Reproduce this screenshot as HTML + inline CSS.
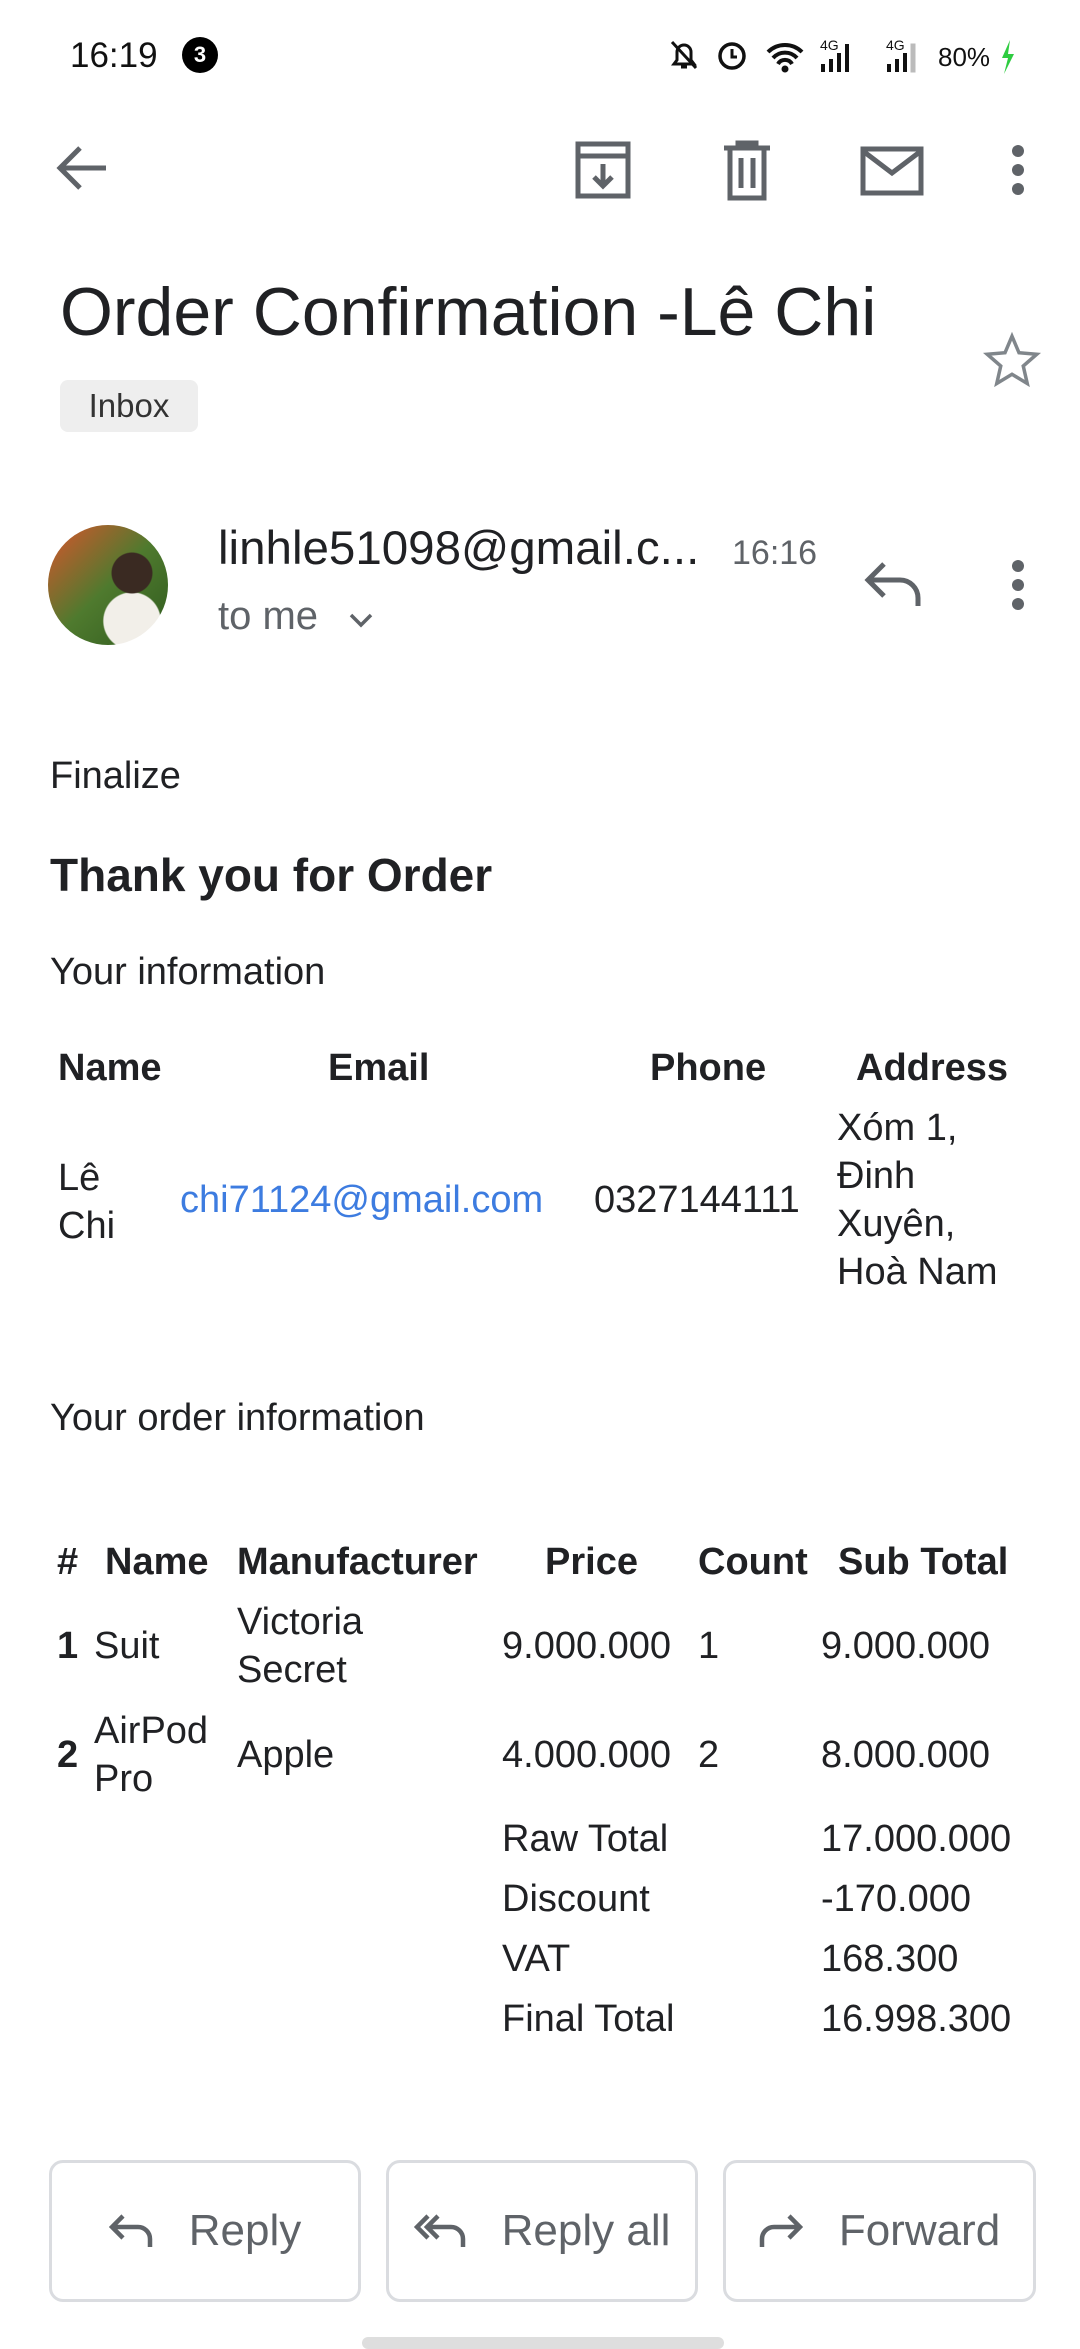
<!DOCTYPE html>
<html><head><meta charset="utf-8"><style>
*{margin:0;padding:0;box-sizing:border-box}
body{width:1080px;height:2340px;background:#fff;position:relative;overflow:hidden;font-family:"Liberation Sans","Noto Sans CJK JP",sans-serif;color:#202124}
.a{position:absolute;white-space:nowrap}
.t{font-size:38px;line-height:48px}
.b{font-weight:bold}
.btn{position:absolute;top:2160px;height:142px;border:3px solid #dadce0;border-radius:14px;display:flex;align-items:center;justify-content:center;font-size:44px;color:#5f6368;gap:36px}
</style></head><body>
<!-- status bar -->
<div class="a" style="left:70px;top:36px;font-size:35px;color:#111">16:19</div>
<div class="a" style="left:182px;top:37px;width:36px;height:36px;border-radius:50%;background:#000;color:#fff;font-size:22px;font-weight:bold;text-align:center;line-height:36px">3</div>
<svg class="a" style="left:668px;top:36px" width="360" height="40" viewBox="0 0 360 40">
<g fill="#111" stroke="#111">
<path d="M6 28 h20 l-3-4 v-8 a7 7 0 0 0-14 0 v8z M13 31h6" fill="none" stroke-width="3"/>
<line x1="4" y1="6" x2="28" y2="32" stroke-width="3"/>
<circle cx="64" cy="20" r="12" fill="none" stroke-width="3.5"/><path d="M64 13v8h5" fill="none" stroke-width="3"/>
<path d="M100 16 a24 24 0 0 1 34 0 M105 22 a16 16 0 0 1 24 0 M110 28 a8 8 0 0 1 14 0" fill="none" stroke-width="4"/>
<circle cx="117" cy="33" r="3"/>
<text x="152" y="14" font-size="14" stroke="none" font-family="Liberation Sans">4G</text>
<rect x="153" y="28" width="4" height="8" stroke="none"/><rect x="161" y="23" width="4" height="13" stroke="none"/><rect x="169" y="17" width="4" height="19" stroke="none"/><rect x="177" y="8" width="4" height="28" stroke="none"/>
<text x="218" y="14" font-size="14" stroke="none" font-family="Liberation Sans">4G</text>
<rect x="219" y="28" width="4" height="8" stroke="none"/><rect x="227" y="23" width="4" height="13" stroke="none"/><rect x="235" y="17" width="4" height="19" stroke="none"/><rect x="243" y="8" width="4" height="28" stroke="#bbb" fill="#bbb"/>
<text x="270" y="30" font-size="26" stroke="none" font-family="Liberation Sans">80%</text>
<path d="M342 4 l-8 18 h6 l-4 16 l10-20 h-6z" fill="#2ecc40" stroke="none"/>
</g></svg>
<!-- toolbar -->
<svg class="a" style="left:56px;top:144px" width="52" height="48" viewBox="0 0 52 48"><path d="M50 24H6 M24 4 4 24l20 20" fill="none" stroke="#5f6368" stroke-width="5"/></svg>
<svg class="a" style="left:574px;top:140px" width="58" height="60" viewBox="0 0 58 60"><path d="M4 4h50v52H4z M4 16h50 M29 24v22 M20 37l9 9 9-9" fill="none" stroke="#5f6368" stroke-width="5"/></svg>
<svg class="a" style="left:722px;top:140px" width="50" height="62" viewBox="0 0 50 62"><path d="M2 8h46 M16 8V3h18v5 M8 8v50h34V8 M19 18v30 M31 18v30" fill="none" stroke="#5f6368" stroke-width="5"/></svg>
<svg class="a" style="left:860px;top:146px" width="64" height="50" viewBox="0 0 64 50"><path d="M3 3h58v44H3z M3 5l29 22 29-22" fill="none" stroke="#5f6368" stroke-width="5"/></svg>
<svg class="a" style="left:1008px;top:144px" width="20" height="52" viewBox="0 0 20 52"><circle cx="10" cy="7" r="6" fill="#5f6368"/><circle cx="10" cy="26" r="6" fill="#5f6368"/><circle cx="10" cy="45" r="6" fill="#5f6368"/></svg>
<!-- title -->
<div class="a" style="left:60px;top:273px;font-size:68px;line-height:78px;color:#202124">Order Confirmation -Lê Chi</div>
<svg class="a" style="left:982px;top:330px" width="60" height="60" viewBox="0 0 24 24"><path d="M12 2.5l2.8 6.6 7.1.6-5.4 4.7 1.6 7L12 17.7l-6.1 3.7 1.6-7L2.1 9.7l7.1-.6z" fill="none" stroke="#80868b" stroke-width="1.4"/></svg>
<div class="a" style="left:60px;top:380px;width:138px;height:52px;background:#eeeeee;border-radius:8px;font-size:33px;line-height:52px;text-align:center;color:#333">Inbox</div>
<!-- sender -->
<div class="a" style="left:48px;top:525px;width:120px;height:120px;border-radius:50%;overflow:hidden;background:radial-gradient(circle at 70% 40%,#3a2a22 0 18%,transparent 19%),radial-gradient(circle at 70% 80%,#f2efe9 0 22%,transparent 23%),linear-gradient(135deg,#d9542c 0%,#4f7a2e 50%,#2f5a1e 100%)"></div>
<div class="a" style="left:218px;top:521px;font-size:47.5px;line-height:56px;color:#202124">linhle51098@gmail.c...</div>
<div class="a" style="left:732px;top:534px;font-size:34px;color:#5f6368">16:16</div>
<div class="a" style="left:218px;top:594px;font-size:40px;color:#5f6368">to me</div>
<svg class="a" style="left:348px;top:612px" width="26" height="18" viewBox="0 0 26 18"><path d="M3 3l10 10 10-10" fill="none" stroke="#5f6368" stroke-width="3.5"/></svg>
<svg class="a" style="left:864px;top:560px" width="58" height="48" viewBox="0 0 58 48"><path d="M20 4 4 20l16 16 M4 20h32a18 18 0 0 1 18 18v8" fill="none" stroke="#5f6368" stroke-width="5"/></svg>
<svg class="a" style="left:1008px;top:559px" width="20" height="52" viewBox="0 0 20 52"><circle cx="10" cy="7" r="6" fill="#5f6368"/><circle cx="10" cy="26" r="6" fill="#5f6368"/><circle cx="10" cy="45" r="6" fill="#5f6368"/></svg>
<!-- body -->
<div class="a t" style="left:50px;top:752px">Finalize</div>
<div class="a b" style="left:50px;top:847px;font-size:46px;line-height:56px">Thank you for Order</div>
<div class="a t" style="left:50px;top:948px">Your information</div>
<div class="a t b" style="left:58px;top:1044px">Name</div>
<div class="a t b" style="left:328px;top:1044px">Email</div>
<div class="a t b" style="left:650px;top:1044px">Phone</div>
<div class="a t b" style="left:856px;top:1044px">Address</div>
<div class="a t" style="left:58px;top:1154px">Lê<br>Chi</div>
<div class="a t" style="left:180px;top:1176px;color:#3d7ce0">chi71124@gmail.com</div>
<div class="a t" style="left:594px;top:1176px">0327144111</div>
<div class="a t" style="left:837px;top:1104px">Xóm 1,<br>Đinh<br>Xuyên,<br>Hoà Nam</div>
<div class="a t" style="left:50px;top:1394px">Your order information</div>
<div class="a t b" style="left:57px;top:1538px">#</div>
<div class="a t b" style="left:105px;top:1538px">Name</div>
<div class="a t b" style="left:237px;top:1538px">Manufacturer</div>
<div class="a t b" style="left:545px;top:1538px">Price</div>
<div class="a t b" style="left:698px;top:1538px">Count</div>
<div class="a t b" style="left:838px;top:1538px">Sub Total</div>
<div class="a t b" style="left:57px;top:1622px">1</div>
<div class="a t" style="left:94px;top:1622px">Suit</div>
<div class="a t" style="left:237px;top:1598px">Victoria<br>Secret</div>
<div class="a t" style="left:502px;top:1622px">9.000.000</div>
<div class="a t" style="left:698px;top:1622px">1</div>
<div class="a t" style="left:821px;top:1622px">9.000.000</div>
<div class="a t b" style="left:57px;top:1731px">2</div>
<div class="a t" style="left:94px;top:1707px">AirPod<br>Pro</div>
<div class="a t" style="left:237px;top:1731px">Apple</div>
<div class="a t" style="left:502px;top:1731px">4.000.000</div>
<div class="a t" style="left:698px;top:1731px">2</div>
<div class="a t" style="left:821px;top:1731px">8.000.000</div>
<div class="a t" style="left:502px;top:1809px;line-height:60px">Raw Total<br>Discount<br>VAT<br>Final Total</div>
<div class="a t" style="left:821px;top:1809px;line-height:60px">17.000.000<br>-170.000<br>168.300<br>16.998.300</div>
<!-- buttons -->
<div class="btn" style="left:49px;width:312px"><svg width="44" height="36" viewBox="0 0 44 36"><path d="M14 3 3 14l11 11 M3 14h26a12 12 0 0 1 12 12v8" fill="none" stroke="#5f6368" stroke-width="4.5"/></svg>Reply</div>
<div class="btn" style="left:386px;width:312px"><svg width="52" height="36" viewBox="0 0 52 36"><path d="M14 3 3 14l11 11 M24 3 13 14l11 11 M13 14h24a12 12 0 0 1 12 12v8" fill="none" stroke="#5f6368" stroke-width="4.5"/></svg>Reply all</div>
<div class="btn" style="left:723px;width:313px"><svg width="44" height="36" viewBox="0 0 44 36"><path d="M30 3l11 11-11 11 M41 14H15A12 12 0 0 0 3 26v8" fill="none" stroke="#5f6368" stroke-width="4.5"/></svg>Forward</div>
<div class="a" style="left:362px;top:2337px;width:362px;height:12px;border-radius:6px;background:#dedede"></div>
</body></html>
